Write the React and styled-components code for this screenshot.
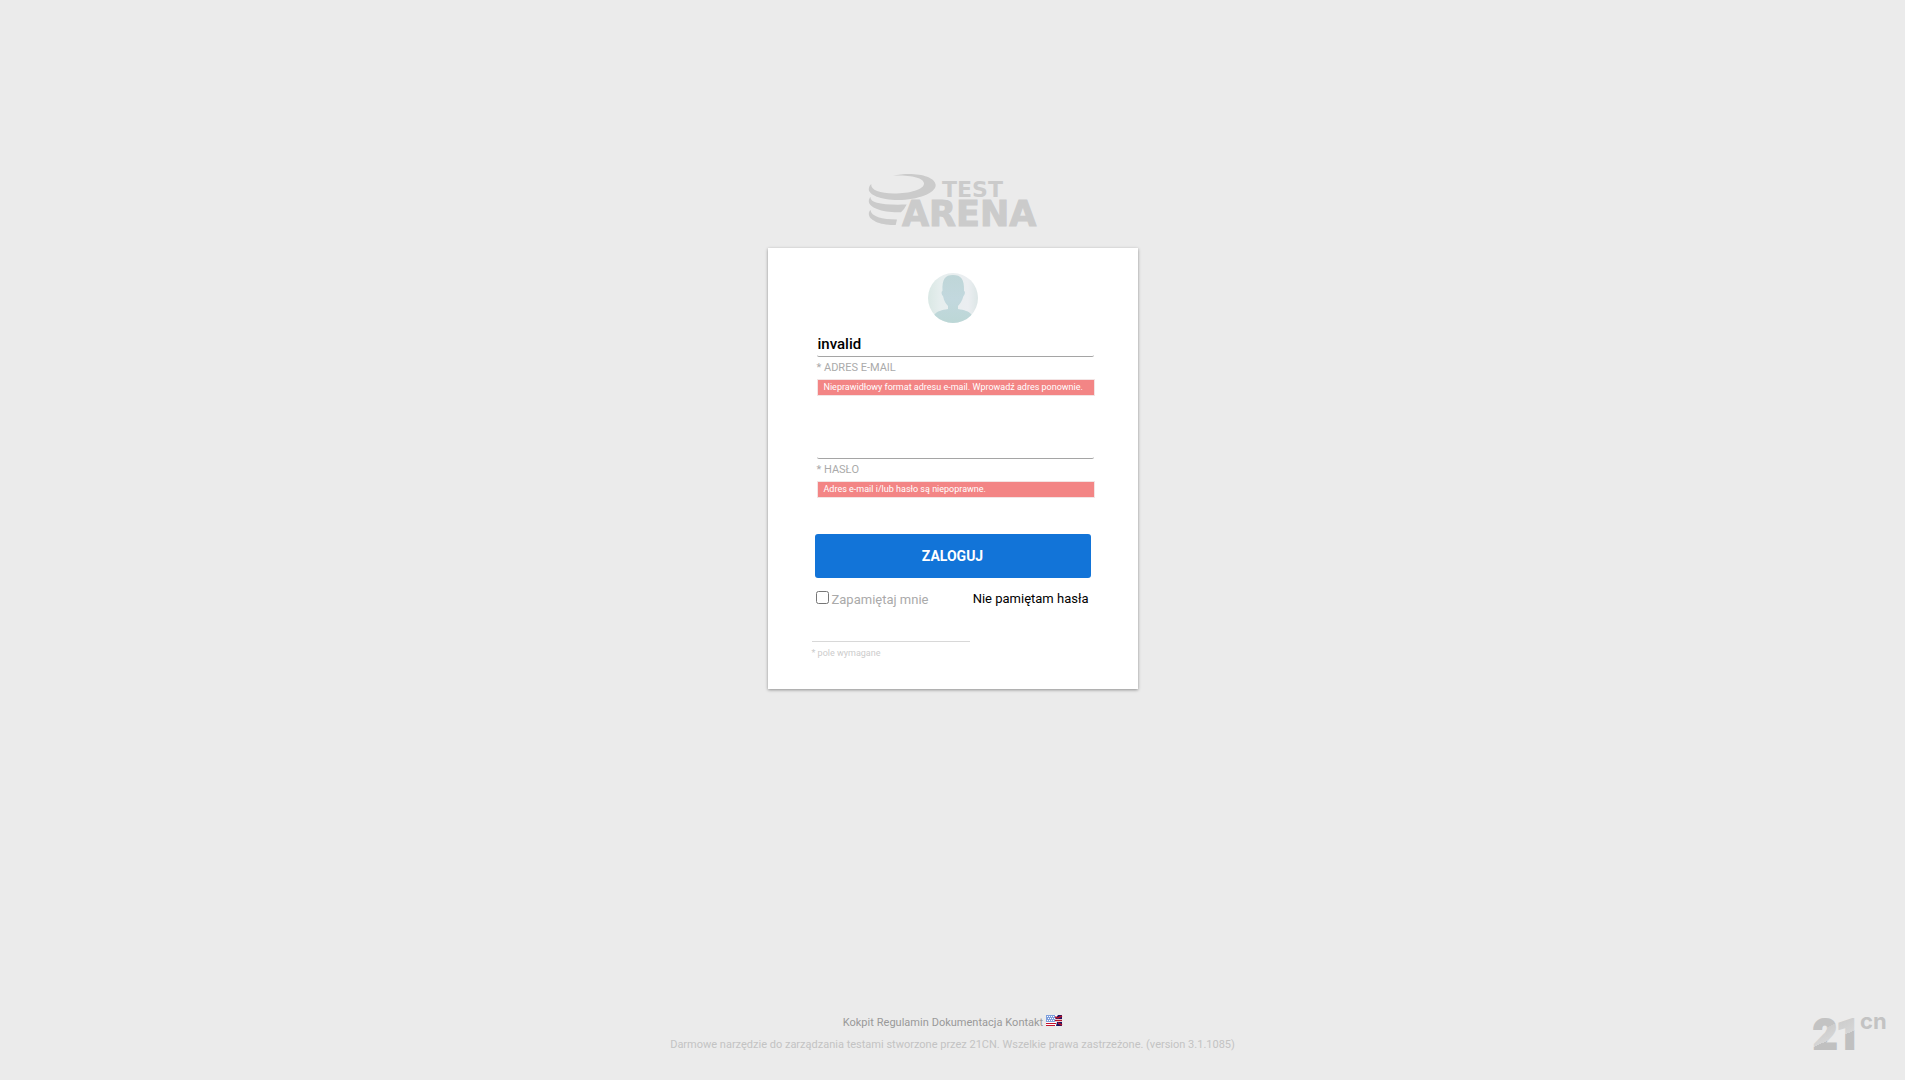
import React from 'react';
import styled, { createGlobalStyle } from 'styled-components';

const GlobalStyle = createGlobalStyle`
  *, *::before, *::after { box-sizing: border-box; }
  body {
    margin: 0;
    background: #ebebeb;
    font-family: Roboto, "Liberation Sans", sans-serif;
    color: #000;
  }
  svg { overflow: visible; }
`;

const Page = styled.div`
  min-height: 100vh;
  display: flex;
  flex-direction: column;
`;

const Main = styled.main`
  flex: 1;
  display: flex;
  flex-direction: column;
  align-items: center;
  padding: 172px 16px 32px;
`;

const Brand = styled.a`
  display: block;
  line-height: 0;
  margin-bottom: 20px;
`;

const Card = styled.section`
  width: 100%;
  max-width: 370px;
  padding: 25px 42px 29px;
  background: #fff;
  box-shadow: 0 1px 3px rgba(0, 0, 0, 0.4);
`;

const AvatarFrame = styled.div`
  display: flex;
  justify-content: center;
  margin-bottom: 8px;
`;

const Form = styled.form`
  display: flex;
  flex-direction: column;
`;

const Fields = styled.div`
  display: flex;
  flex-direction: column;
  gap: 37px;
  padding-left: 7px;
`;

const Field = styled.div`
  display: flex;
  flex-direction: column;
`;

const TextInput = styled.input`
  width: 277px;
  max-width: 100%;
  height: 26px;
  padding: 0 1px;
  border: 0;
  border-bottom: 1px solid #a5a5a5;
  border-radius: 2px;
  outline: 0;
  background: transparent;
  color: #000;
  font: 500 15px/20px Roboto, sans-serif;
`;

const Label = styled.label`
  margin-top: 4px;
  color: #aaa;
  font-size: 11px;
  line-height: 14px;
  text-transform: uppercase;
`;

const ErrorText = styled.p`
  width: 278px;
  max-width: 100%;
  margin: 4px 0 0;
  padding: 0 6px;
  border: 1px solid #f3e4e4;
  background: #f38585;
  color: #fff;
  font-size: 9px;
  line-height: 15px;
`;

const SubmitButton = styled.button`
  width: 276px;
  max-width: 100%;
  height: 44px;
  margin: 36px 0 0 5px;
  border: 0;
  border-radius: 3px;
  background: #1274d8;
  color: #fff;
  font: 700 14px/20px Roboto, sans-serif;
  text-transform: uppercase;
  cursor: pointer;
`;

const Options = styled.div`
  display: flex;
  justify-content: space-between;
  padding: 12px 7px 0 6px;
  font-size: 13px;
  line-height: 18px;
`;

const Remember = styled.label`
  display: flex;
  gap: 3px;
  line-height: 20px;
  color: #aaa;
`;

const Tick = styled.input`
  width: 13px;
  height: 13px;
  margin: 1px 0 0;
`;

const PlainLink = styled.a`
  color: #000;
  text-decoration: none;
`;

const Note = styled.p`
  width: 158px;
  margin: 31px 0 0 2px;
  padding-top: 5px;
  border-top: 1px solid #d8d8d8;
  color: #ccc;
  font-size: 9px;
  line-height: 13px;
`;

const Footer = styled.footer`
  display: grid;
  grid-template-columns: 1fr auto 1fr;
  align-items: end;
  padding: 0 18px 27px;
  font-size: 11px;
  line-height: 16px;
  text-align: center;
`;

const FooterText = styled.div`
  grid-column: 2;
  color: #c3c3c3;
`;

const FooterNav = styled.nav`
  display: flex;
  justify-content: center;
  gap: 3px;
  margin-bottom: 6px;

  a {
    color: #999;
    text-decoration: none;
  }
`;

const Vendor = styled.a`
  justify-self: end;
  line-height: 0;
`;

function TestArenaLogo() {
  return (
    <svg width="170" height="56" viewBox="0 0 170 56" fill="#cbcbcb" role="img" aria-label="Test Arena">
      <path d="M25 3.500C44 -.5 67 3 67.700 13C68 21 50 28 30 28C12 28 1 22.500 .8 17.500C.8 15.500 1.500 13.500 3.200 12C2.500 18 12 21.500 26 21.500C42 21.500 56 17.500 56 11.500C56 5.500 42 3 25 3.500Z" />
      <path d="M2.500 25C2 31 14 33.300 38.700 32.500L36 37L33 40.300C15 41 .8 35.500 .8 29.500C.8 27.500 1.500 26 2.500 25Z" />
      <path d="M2.500 38C3 44.500 14 47.500 29 47.500L27.700 53C12 53.500 .8 48 .8 42C.8 40 1.500 39 2.500 38Z" />
      <g fontFamily="'DejaVu Sans', sans-serif" fontWeight="700">
        <text x="74" y="25" fontSize="22">TEST</text>
        <text x="34" y="54" fontSize="35" stroke="#cbcbcb" strokeWidth="1">ARENA</text>
      </g>
    </svg>
  );
}

function Avatar() {
  return (
    <svg width="50" height="50" viewBox="0 0 50 50" role="img" aria-label="Avatar">
      <defs>
        <clipPath id="face"><circle cx="25" cy="25" r="25" /></clipPath>
        <linearGradient id="bg" x1="0" x2="1">
          <stop offset="0" stopColor="#dae8e5" />
          <stop offset=".25" stopColor="#e6eeee" />
          <stop offset=".8" stopColor="#ebeef1" />
          <stop offset="1" stopColor="#dce6e6" />
        </linearGradient>
        <linearGradient id="body" x1="0" y1="0" x2="0" y2="1">
          <stop offset="0" stopColor="#bfd6d8" />
          <stop offset=".5" stopColor="#c2d8de" />
          <stop offset="1" stopColor="#bcd7d6" />
        </linearGradient>
      </defs>
      <g clipPath="url(#face)">
        <rect width="50" height="50" fill="url(#bg)" />
        <path fill="url(#body)" d="M25 2C33 2 36.500 6 36 18C37.500 18 37 22 35.500 23C34 28 32 31 30 33L30 36C36 37 41 38 44 42V50H6V42C9 38 14 37 20 36L20 33C18 31 16 28 15 23C13.500 22 13 18 14.500 18C14 6 17 2 25 2Z" />
      </g>
    </svg>
  );
}

function Flag() {
  return (
    <svg width="16" height="11" viewBox="0 0 16 11" role="img" aria-label="English">
      <rect width="16" height="11" fill="#fff" />
      <path fill="#c4122f" d="M0 8H10V9H0ZM0 10H9V11H0Z" />
      <rect width="9" height="7" fill="#7e9fdc" />
      <path stroke="#fff" strokeDasharray="1 1" d="M1 1.500H8M2 3.500H9M1 5.500H8" />
      <path fill="#1b1464" d="M12 0H16V11H10L11 7L9 4Z" />
      <path stroke="#fff" strokeWidth="3" d="M9 5.500H16" />
      <path stroke="#b3122b" strokeWidth="1.500" fill="none" d="M9 5.500H16M9 2L12 3L16 1M12 8L16 10" />
    </svg>
  );
}

function VendorLogo() {
  return (
    <svg width="74" height="39" viewBox="0 0 74 39" role="img" aria-label="21CN">
      <defs>
        <linearGradient id="two" gradientUnits="userSpaceOnUse" x1="0" y1="0" x2="16.400" y2="36.400">
          <stop offset=".45" stopColor="#c3c3c3" />
          <stop offset=".45" stopColor="#cdcdcd" />
          <stop offset=".76" stopColor="#d6d6d6" />
          <stop offset=".76" stopColor="#c0c0c0" />
        </linearGradient>
        <linearGradient id="one" gradientUnits="userSpaceOnUse" x1="0" y1="0" x2="16.400" y2="36.400">
          <stop offset=".4" stopColor="#cccccc" />
          <stop offset=".8" stopColor="#d6d6d6" />
          <stop offset=".8" stopColor="#c0c0c0" />
        </linearGradient>
      </defs>
      <g fontFamily="Roboto, sans-serif" fontWeight="900" fontSize="42" strokeWidth="2">
        <text x="0" y="35" fill="url(#two)" stroke="url(#two)">2</text>
        <text x="23" y="35" fill="url(#one)" stroke="url(#one)">1</text>
      </g>
      <text x="47" y="15" fontFamily="Inter, sans-serif" fontWeight="700" fontSize="22" fill="#c3c3c3">cn</text>
    </svg>
  );
}

export default function App() {
  return (
    <Page>
      <GlobalStyle />
      <Main>
        <Brand href="#"><TestArenaLogo /></Brand>
        <Card>
          <AvatarFrame><Avatar /></AvatarFrame>
          <Form noValidate onSubmit={(e) => e.preventDefault()}>
            <Fields>
              <Field>
                <TextInput id="email" type="email" defaultValue="invalid" aria-describedby="email-error" />
                <Label htmlFor="email">* Adres e-mail</Label>
                <ErrorText id="email-error">Nieprawidłowy format adresu e-mail. Wprowadź adres ponownie.</ErrorText>
              </Field>
              <Field>
                <TextInput id="password" type="password" aria-describedby="password-error" />
                <Label htmlFor="password">* Hasło</Label>
                <ErrorText id="password-error">Adres e-mail i/lub hasło są niepoprawne.</ErrorText>
              </Field>
            </Fields>
            <SubmitButton type="submit">Zaloguj</SubmitButton>
            <Options>
              <Remember htmlFor="remember">
                <Tick id="remember" type="checkbox" />
                Zapamiętaj mnie
              </Remember>
              <PlainLink href="#">Nie pamiętam hasła</PlainLink>
            </Options>
          </Form>
          <Note>* pole wymagane</Note>
        </Card>
      </Main>
      <Footer>
        <FooterText>
          <FooterNav>
            <a href="#">Kokpit</a>
            <a href="#">Regulamin</a>
            <a href="#">Dokumentacja</a>
            <a href="#">Kontakt</a>
            <a href="#"><Flag /></a>
          </FooterNav>
          Darmowe narzędzie do zarządzania testami stworzone przez 21CN. Wszelkie prawa zastrzeżone. (version 3.1.1085)
        </FooterText>
        <Vendor href="#"><VendorLogo /></Vendor>
      </Footer>
    </Page>
  );
}
